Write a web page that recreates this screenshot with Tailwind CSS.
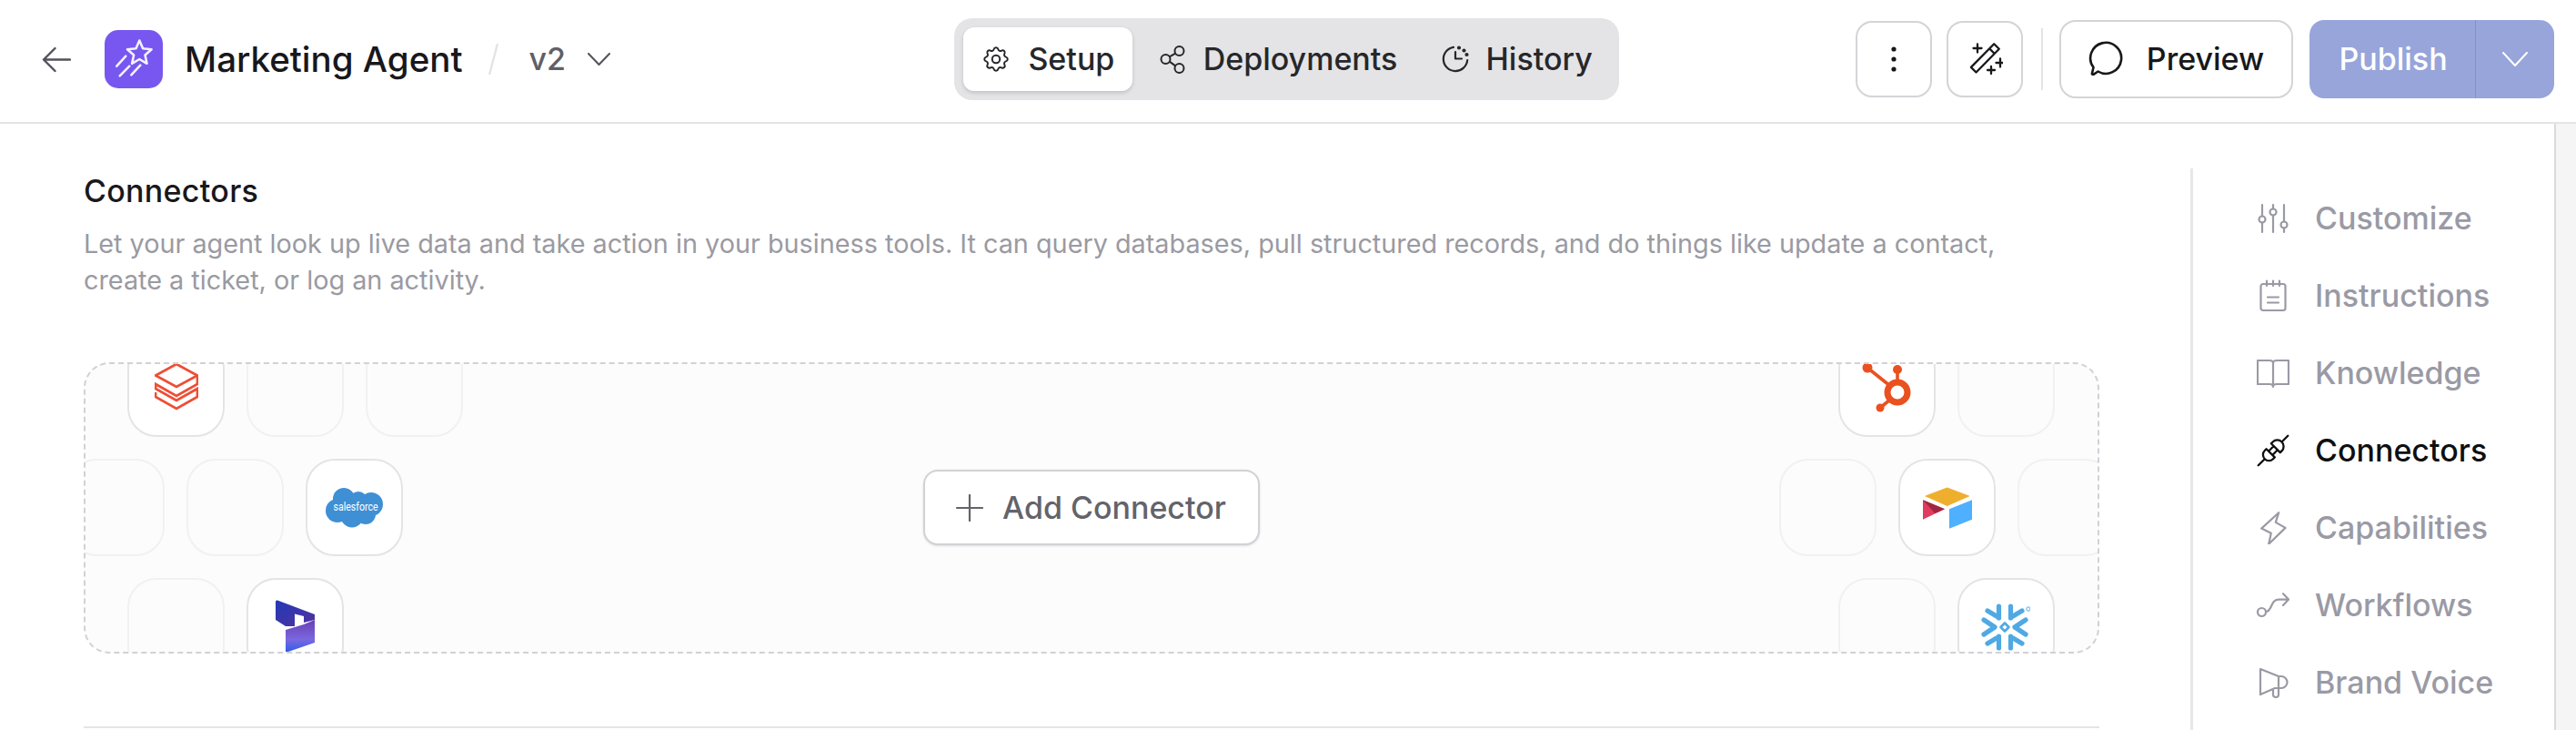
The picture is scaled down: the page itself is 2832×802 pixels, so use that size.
<!DOCTYPE html>
<html lang="en">
<head>
<meta charset="utf-8">
<title>Marketing Agent</title>
<script src="https://cdn.jsdelivr.net/npm/@tailwindcss/browser@4"></script>
</head>
<body class="w-[2832px] h-[802px] overflow-hidden bg-white font-['Inter',sans-serif] text-[#18181b]">
<header class="h-[136px] border-b-2 border-[#e4e4e7] flex items-center pb-[5px]">
  <div class="w-[1049px] shrink-0 flex items-center pl-[46px]">
    <svg class="w-[32px] h-[32px] shrink-0" viewBox="0 0 32 32" fill="none" stroke="#52525b" stroke-width="2.4" stroke-linecap="round" stroke-linejoin="round"><path d="M31 16.5H2M14.5 4 2 16.5 14.5 29"/></svg>
    <div class="ml-[37px] w-[64px] h-[64px] rounded-[15px] bg-[#7757f0] shrink-0">
      <svg class="w-[64px] h-[64px]" viewBox="0 0 64 64" fill="none" stroke="#f4f1ff" stroke-width="2.6" stroke-linecap="round" stroke-linejoin="round"><path d="M38.3 11.5 42.1 20.2 51.6 21.2 44.5 27.5 46.5 36.8 38.3 32 30.1 36.8 32.1 27.5 25 21.2 34.5 20.2Z"/><path d="M13.3 39.7 23.3 28.7M16.7 50.3 27.3 39.7M29.3 49.3 39.3 38.7"/></svg>
    </div>
    <span class="ml-[24px] text-[38.5px] leading-[48px] font-medium whitespace-nowrap">Marketing Agent</span>
    <span class="ml-[28px] w-[11px] h-[36px] shrink-0 block">
      <svg class="w-[11px] h-[36px]" viewBox="0 0 11 36" fill="none" stroke="#e4e4e7" stroke-width="2.4"><path d="M10 1 1 35"/></svg>
    </span>
    <span class="ml-[34px] text-[34px] leading-[48px] font-medium text-[#5f5f66]">v2</span>
    <svg class="ml-[24px] w-[25px] h-[14px] shrink-0" viewBox="0 0 25 14" fill="none" stroke="#52525b" stroke-width="2" stroke-linecap="round" stroke-linejoin="round"><path d="M1 1 12.5 13 24 1"/></svg>
  </div>
  <nav class="w-[731px] h-[90px] shrink-0 rounded-[20px] bg-[#e4e4e7] p-[10px] flex gap-[8px] text-[34px] font-[450] text-[#27272a]">
    <div class="w-[186px] h-[70px] rounded-[12px] bg-white shadow-[0_2px_4px_rgba(0,0,0,0.16)] flex items-center justify-center gap-[18px]">
      <svg class="w-[34px] h-[34px]" viewBox="0 0 24 24" fill="none" stroke="#27272a" stroke-width="1.4" stroke-linecap="round" stroke-linejoin="round"><path d="M10.325 4.317c.426-1.756 2.924-1.756 3.35 0a1.724 1.724 0 0 0 2.573 1.066c1.543-.94 3.31.826 2.37 2.37a1.724 1.724 0 0 0 1.065 2.572c1.756.426 1.756 2.924 0 3.35a1.724 1.724 0 0 0-1.066 2.573c.94 1.543-.826 3.31-2.37 2.37a1.724 1.724 0 0 0-2.572 1.065c-.426 1.756-2.924 1.756-3.35 0a1.724 1.724 0 0 0-2.573-1.066c-1.543.94-3.31-.826-2.37-2.37a1.724 1.724 0 0 0-1.065-2.572c-1.756-.426-1.756-2.924 0-3.35a1.724 1.724 0 0 0 1.066-2.573c-.94-1.543.826-3.31 2.37-2.37 1 .608 2.296.07 2.572-1.065z"/><circle cx="12" cy="12" r="3"/></svg>
      <span>Setup</span>
    </div>
    <div class="w-[304px] h-[70px] flex items-center justify-center gap-[18px]">
      <svg class="w-[32px] h-[32px]" viewBox="0 0 32 32" fill="none" stroke="#27272a" stroke-width="2"><circle cx="8.5" cy="16" r="5"/><circle cx="23.5" cy="7" r="5"/><circle cx="23.5" cy="26" r="5"/><path d="M12.8 13.4 19.2 9.6M12.8 18.6 19.2 23.4"/></svg>
      <span>Deployments</span>
    </div>
    <div class="w-[206px] h-[70px] flex items-center justify-center gap-[18px]">
      <svg class="w-[32px] h-[32px]" viewBox="0 0 32 32" fill="none" stroke="#27272a" stroke-width="2.2" stroke-linecap="round" stroke-linejoin="round"><path d="M14 2.8A13.2 13.2 0 1 0 29.2 17"/><path d="M16 8V15.5H23"/><circle cx="20" cy="3.5" r="1" /><circle cx="25.5" cy="6.5" r="1"/><circle cx="28.5" cy="11" r="1"/></svg>
      <span>History</span>
    </div>
  </nav>
  <div class="flex-1 flex items-center justify-end pr-[24px]">
    <button class="w-[84px] h-[84px] rounded-[18px] border-2 border-[#d4d4d8] flex items-center justify-center">
      <svg class="w-[10px] h-[32px]" viewBox="0 0 10 32" fill="#18181b"><circle cx="5" cy="5" r="2.6"/><circle cx="5" cy="16" r="2.6"/><circle cx="5" cy="27" r="2.6"/></svg>
    </button>
    <button class="ml-[16px] w-[84px] h-[84px] rounded-[18px] border-2 border-[#d4d4d8] flex items-center justify-center">
      <svg class="w-[40px] h-[40px]" viewBox="0 0 40 40" fill="none" stroke="#18181b" stroke-width="2.3" stroke-linecap="round" stroke-linejoin="round"><path d="M4.9 28.9 30.2 3.2 35.8 8.800 10.500 34.500ZM25.200 8.400 30.800 14"/><path d="M12 3.500V12.500M7.500 8H16.500M37 19.500V28.500M32.500 24H41.500M27 28V36M23 32H31"/></svg>
    </button>
    <div class="ml-[20px] mr-[18px] w-[2px] h-[68px] bg-[#e4e4e7]"></div>
    <button class="w-[257px] h-[86px] rounded-[18px] border-2 border-[#d4d4d8] flex items-center justify-center gap-[24px] text-[34px] font-medium">
      <svg class="w-[40px] h-[40px]" viewBox="0 0 40 40" fill="none" stroke="#18181b" stroke-width="2.6" stroke-linecap="round" stroke-linejoin="round"><path d="M10.500 33.500A17 17 0 1 0 5.500 29L4 35.500Q3.500 37 5.500 36.800Z"/></svg>
      <span>Preview</span>
    </button>
    <div class="ml-[18px] w-[269px] h-[86px] rounded-[16px] bg-[#97a5da] flex items-stretch text-white text-[34px] font-medium">
      <div class="w-[182px] flex items-center justify-center pl-[2px]">Publish</div>
      <div class="flex-1 border-l border-[#8491c9] flex items-center justify-center">
        <svg class="w-[28px] h-[16px]" viewBox="0 0 28 16" fill="none" stroke="#fff" stroke-width="2" stroke-linecap="round" stroke-linejoin="round"><path d="M1 1 14 15 27 1"/></svg>
      </div>
    </div>
  </div>
</header>
<div class="flex h-[666px]">
  <main class="flex-1 min-w-0 overflow-hidden pl-[92px] pr-[100px] pt-[54px]">
    <h2 class="text-[34px] leading-[40px] font-[450] tracking-[0.3px] text-[#18181b]">Connectors</h2>
    <p class="mt-[18px] text-[28.8px] leading-[40px] text-[#9a9aa2] whitespace-nowrap">Let your agent look up live data and take action in your business tools. It can query databases, pull structured records, and do things like update a contact,<br>create a ticket, or log an activity.</p>
    <div class="mt-[70px] h-[320px] rounded-[28px] border-2 border-dashed border-[#d1d1d6] bg-[#fcfcfd] overflow-hidden flex flex-col gap-[24px]">
      <div class="-mt-[27px] flex justify-between pl-[46px] pr-[47px] shrink-0">
        <div class="flex gap-[24px]">
          <div class="w-[107px] h-[107px] rounded-[32px] border-2 border-[#e4e4e7] bg-white flex items-end justify-center pb-[27px]">
            <svg class="w-[48px] h-[52px]" viewBox="0 0 48 52" fill="none" stroke="#ee4e34" stroke-width="2.8"><path d="M24 1 47 13.500 24 26 1 13.500Z"/><path d="M47 14V23L24 36 1 23V28L24 41 47 28V37L24 50 1 37V32"/></svg>
          </div>
          <div class="w-[107px] h-[107px] rounded-[32px] border-2 border-[#f1f1f3]"></div>
          <div class="w-[107px] h-[107px] rounded-[32px] border-2 border-[#f1f1f3]"></div>
        </div>
        <div class="flex gap-[24px]">
          <div class="w-[107px] h-[107px] rounded-[32px] border-2 border-[#e4e4e7] bg-white flex items-end justify-center pb-[24px]">
            <svg class="w-[56px] h-[56px]" viewBox="0 0 56 56" fill="none" stroke="#ea5120" stroke-linecap="round"><circle cx="39" cy="33" r="11" stroke-width="7"/><path d="M6 6 31 26M39 8V20M20 50 31 41" stroke-width="3.6"/><circle cx="6" cy="6" r="5.500" fill="#ea5120" stroke="none"/><circle cx="39" cy="8" r="5" fill="#ea5120" stroke="none"/><circle cx="20" cy="50" r="4.500" fill="#ea5120" stroke="none"/></svg>
          </div>
          <div class="w-[107px] h-[107px] rounded-[32px] border-2 border-[#f1f1f3]"></div>
        </div>
      </div>
      <div class="flex items-center justify-between -ml-[20px] -mr-[19px] shrink-0">
        <div class="flex gap-[24px]">
          <div class="w-[107px] h-[107px] rounded-[32px] border-2 border-[#f1f1f3]"></div>
          <div class="w-[107px] h-[107px] rounded-[32px] border-2 border-[#f1f1f3]"></div>
          <div class="w-[107px] h-[107px] rounded-[32px] border-2 border-[#e4e4e7] bg-white flex items-center justify-center">
            <svg class="w-[64px] h-[44px]" viewBox="0 0 64 44"><g fill="#3f8fd5"><circle cx="20" cy="12" r="12"/><circle cx="36" cy="14" r="10"/><circle cx="50" cy="18" r="13"/><circle cx="13" cy="25" r="13"/><circle cx="29" cy="31" r="12.5"/><circle cx="44" cy="29" r="11"/></g><text x="8.500" y="24.500" fill="#fff" font-family="Roboto, sans-serif" font-size="12.5" textLength="49" lengthAdjust="spacingAndGlyphs">salesforce</text></svg>
          </div>
        </div>
        <button class="w-[370px] h-[83px] rounded-[16px] border-2 border-[#d1d1d6] bg-white shadow-sm flex items-center justify-center gap-[21px] text-[34px] font-medium text-[#63636a]">
          <svg class="w-[30px] h-[30px]" viewBox="0 0 30 30" fill="none" stroke="#63636a" stroke-width="2.2" stroke-linecap="round"><path d="M15 1V29M1 15H29"/></svg>
          <span>Add Connector</span>
        </button>
        <div class="flex gap-[24px]">
          <div class="w-[107px] h-[107px] rounded-[32px] border-2 border-[#f1f1f3]"></div>
          <div class="w-[107px] h-[107px] rounded-[32px] border-2 border-[#e4e4e7] bg-white flex items-center justify-center">
            <svg class="w-[54px] h-[46px]" viewBox="0 0 54 46" stroke-linejoin="round"><path d="M26.700 1 50.500 10 26.700 20.500 3 10Z" fill="#efaf2e" stroke="#efaf2e"/><path d="M29 24.300 54 14.300V35.700L29 45.700Z" fill="#4fb0ff"/><path d="M0 14.300 24 24.300 0 35.700Z" fill="#e03c5f"/><path d="M0 14.300 24 24.300 13.300 29Z" fill="#a0273f"/></svg>
          </div>
          <div class="w-[107px] h-[107px] rounded-[32px] border-2 border-[#f1f1f3]"></div>
        </div>
      </div>
      <div class="flex justify-between pl-[46px] pr-[47px] shrink-0">
        <div class="flex gap-[24px]">
          <div class="w-[107px] h-[107px] rounded-[32px] border-2 border-[#f1f1f3]"></div>
          <div class="w-[107px] h-[107px] rounded-[32px] border-2 border-[#e4e4e7] bg-white flex justify-center pt-[22px]">
            <svg class="w-[43px] h-[58px] shrink-0" viewBox="0 0 43 58"><defs><linearGradient id="dyn" x1="0" y1="0" x2="0" y2="1"><stop offset="0" stop-color="#6a3fb3"/><stop offset="0.6" stop-color="#7a68e0"/><stop offset="1" stop-color="#2a5ee8"/></linearGradient><linearGradient id="dyd" x1="0" y1="0" x2="1" y2="1"><stop offset="0" stop-color="#2239b8"/><stop offset="1" stop-color="#53319f"/></linearGradient></defs><path d="M11 33 31 27 43 22V47L11 58Z" fill="url(#dyn)"/><path d="M0 2Q0 0 2 .5L43 16V22L31 25V18L21 15.500V29H11L0 22Z" fill="url(#dyd)"/></svg>
          </div>
        </div>
        <div class="flex gap-[24px]">
          <div class="w-[107px] h-[107px] rounded-[32px] border-2 border-[#f1f1f3]"></div>
          <div class="w-[107px] h-[107px] rounded-[32px] border-2 border-[#e4e4e7] bg-white flex justify-center pt-[26px] pr-[4px]">
            <svg class="w-[56px] h-[56px] shrink-0" viewBox="-28 -26 56 56" fill="none" stroke="#4fa9e3" stroke-width="5.2" stroke-linecap="round" stroke-linejoin="round"><path d="M-6.500 -23V-10M6.500 -23V-10M-6.500 23V10M6.500 23V10M-23 -8-11 0-23 8M23 -8 11 0 23 8M-19 -18-9 -12M19 -18 9 -12M-19 18-9 12M19 18 9 12"/><path d="M0 -4.500 4.500 0 0 4.500-4.500 0Z" stroke-width="2.6"/><circle cx="26" cy="-20" r="2.200" stroke-width="1"/></svg>
          </div>
        </div>
      </div>
    </div>
    <div class="mt-[80px] h-[2px] bg-[#e4e4e7]"></div>
  </main>
  <aside class="w-[400px] shrink-0 mt-[49px] border-l-[3px] border-[#e7e7ea] pl-[70px] pt-[12px] flex flex-col text-[34px] font-[450] text-[#9a9aa5]">
    <div class="h-[85px] shrink-0 flex items-center gap-[28px]">
      <svg class="w-[36px] h-[36px]" viewBox="0 0 36 36" fill="none" stroke="#9a9aa5" stroke-width="2.2" stroke-linecap="round"><path d="M6 3V15.500M6 22.500V33M18 3V7.500M18 14.500V33M30 3V21.500M30 28.500V33"/><circle cx="6" cy="19" r="3.500"/><circle cx="18" cy="11" r="3.500"/><circle cx="30" cy="25" r="3.500"/></svg>
      <span>Customize</span>
    </div>
    <div class="h-[85px] shrink-0 flex items-center gap-[28px]">
      <svg class="w-[36px] h-[36px]" viewBox="0 0 36 36" fill="none" stroke="#9a9aa5" stroke-width="2.2" stroke-linecap="round" stroke-linejoin="round"><rect x="4.500" y="5" width="27" height="29" rx="2.500"/><path d="M11 1.500V7M18 1.500V7M25 1.500V7M12 19.500H24M12 25.500H24"/></svg>
      <span>Instructions</span>
    </div>
    <div class="h-[85px] shrink-0 flex items-center gap-[28px]">
      <svg class="w-[36px] h-[36px]" viewBox="0 0 36 36" fill="none" stroke="#9a9aa5" stroke-width="2.2" stroke-linejoin="round"><path d="M1 4H14Q18 4 18 7 18 4 22 4H35V30H22Q18 30 18 33 18 30 14 30H1ZM18 7V33"/></svg>
      <span>Knowledge</span>
    </div>
    <div class="h-[85px] shrink-0 flex items-center gap-[28px] text-[#0f0f11]">
      <svg class="w-[36px] h-[36px]" viewBox="0 0 36 36" fill="none" stroke="#0f0f11" stroke-width="2.3" stroke-linecap="round" stroke-linejoin="round"><g transform="rotate(-45 18 18)"><path d="M14 11.500V24.500H11.500A6.500 6.500 0 0 1 11.500 11.500ZM5 18H-5M22 11V25H24.500A7 7 0 0 0 24.500 11ZM31.500 18H41M14 15H22M14 21H22"/></g></svg>
      <span>Connectors</span>
    </div>
    <div class="h-[85px] shrink-0 flex items-center gap-[28px]">
      <svg class="w-[36px] h-[36px]" viewBox="0 0 36 36" fill="none" stroke="#9a9aa5" stroke-width="2.2" stroke-linejoin="round"><path d="M24.200 1.200 5.200 18.600 15.800 23.800 13.200 35.700 31.500 17.900 20.800 11.900Z"/></svg>
      <span>Capabilities</span>
    </div>
    <div class="h-[85px] shrink-0 flex items-center gap-[28px]">
      <svg class="w-[36px] h-[36px]" viewBox="0 0 36 36" fill="none" stroke="#9a9aa5" stroke-width="2.2" stroke-linecap="round" stroke-linejoin="round"><circle cx="5.500" cy="25.500" r="4.500"/><path d="M10 25C17 25 15 11.600 24 11.600H35M29 5.300 35 11.600 29 18"/></svg>
      <span>Workflows</span>
    </div>
    <div class="h-[85px] shrink-0 flex items-center gap-[28px]">
      <svg class="w-[36px] h-[36px]" viewBox="0 0 36 36" fill="none" stroke="#9a9aa5" stroke-width="2.2" stroke-linecap="round" stroke-linejoin="round"><path d="M4 3 24 11H27A6.500 6.500 0 0 1 27 24H20L4 31ZM24 11V24M18 25V31A3 3 0 0 0 24 31V24"/></svg>
      <span>Brand Voice</span>
    </div>
  </aside>
  <div class="w-[24px] shrink-0 border-l-2 border-[#dadadd] bg-[#f5f5f5]"></div>
</div>
</body>
</html>
